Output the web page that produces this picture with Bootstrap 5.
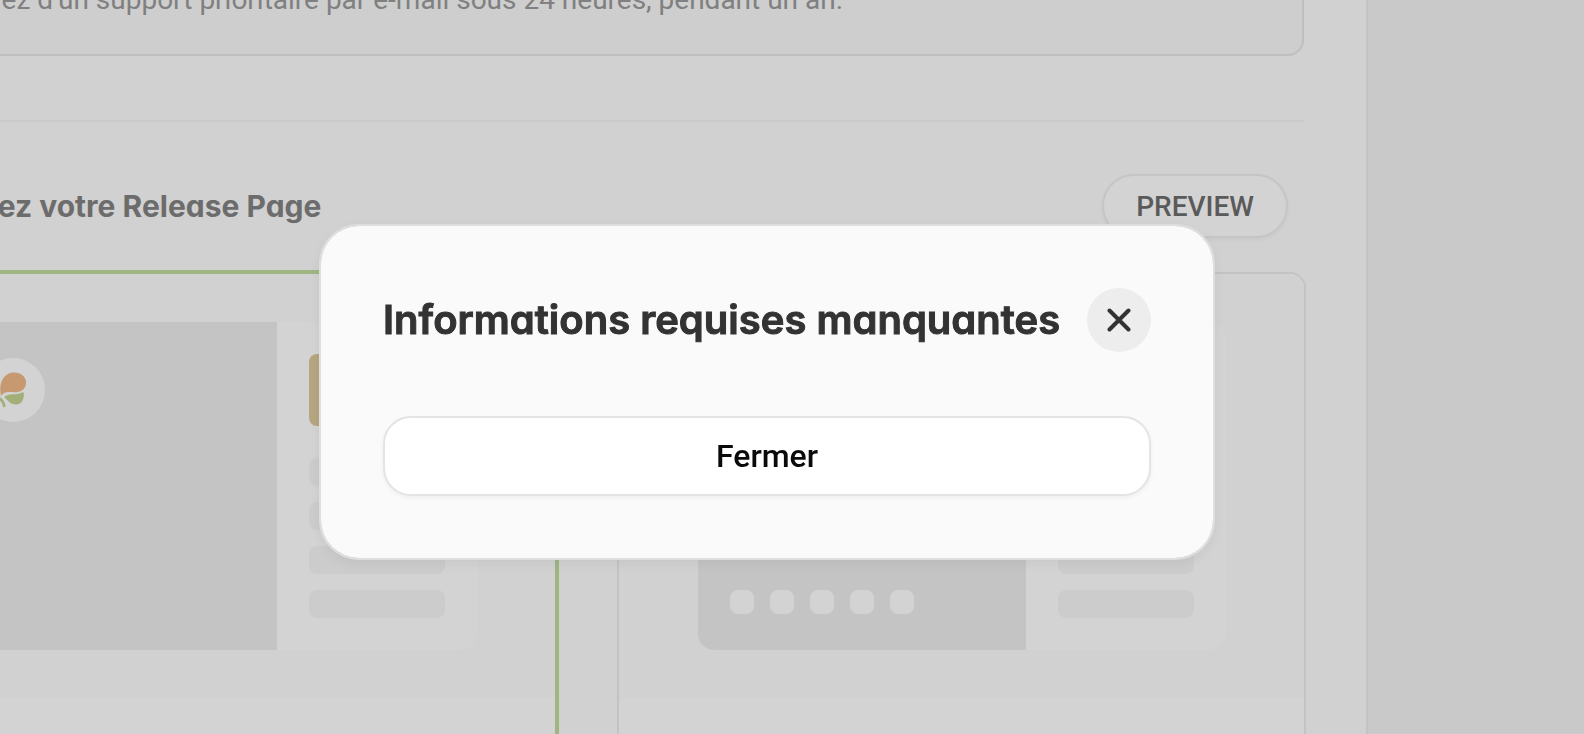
<!DOCTYPE html>
<html lang="fr">
<head>
<meta charset="utf-8">
<meta name="viewport" content="width=device-width, initial-scale=1">
<title>Release Page</title>
<link href="https://cdn.jsdelivr.net/npm/bootstrap@5.3.0/dist/css/bootstrap.min.css" rel="stylesheet">
<style>
  body { background: #c9c9c9; font-family: Roboto, "Liberation Sans", sans-serif; overflow: hidden; }
  .display-face { font-family: Inter, "Liberation Sans", sans-serif; font-feature-settings: "cv11"; font-weight: 700; }

  /* The settings sheet runs past the left and top edges of the window */
  .sheet { background: #d1d1d1; border-right: 2px solid #c3c3c3; margin: -80px 216px 0 -196px; padding: 0 62px 0 64px; height: calc(100vh + 80px); overflow: hidden; }
  .support-box { background: #cecece; border: 2px solid #bfbfbf; border-radius: 16px; padding: 62px 32px 38px; font-size: 28px; line-height: 32px; color: #808080; }
  .divider { height: 2px; margin: 64px 0 52px; background: #cacaca; }
  .section-head { padding: 0 16px 0 18px; margin-bottom: 34px; }
  .section-head h2 { font-size: 30px; line-height: 40px; color: #6c6c6c; }
  .btn-preview { --bs-btn-color: #5a5a5a; --bs-btn-bg: #d3d3d3; --bs-btn-border-color: #c5c5c5; --bs-btn-border-width: 2px; --bs-btn-border-radius: 32px; --bs-btn-padding-x: 32px; --bs-btn-padding-y: 0; --bs-btn-font-size: 28px; --bs-btn-font-weight: 500; height: 64px; line-height: 62px; box-shadow: 0 2px 4px rgba(0, 0, 0, .04); }

  .templates { display: grid; grid-template-columns: 1fr 1fr; gap: 60px; margin-right: -2px; }
  .template { border: 2px solid #c3c3c3; border-radius: 16px; background: #d3d3d3; overflow: hidden; height: 600px; }
  .template.selected { border-color: #9fb582; box-shadow: 0 0 0 2px #9fb582; }
  .stage { background: #d1d1d1; padding: 48px 0; }
  .mock { width: 528px; height: 328px; border-radius: 16px; background: #d3d3d3; overflow: hidden; }
  .mock-main { background: #c4c4c4; width: 328px; padding: 36px 32px; }
  .mock-side { width: 200px; padding: 32px; }
  .mock-logo { width: 64px; height: 64px; border-radius: 50%; background: #d3d3d3; }
  .mock-cta { height: 72px; border-radius: 8px; background: #b6a581; margin-bottom: 32px; }
  .mock-line { height: 28px; border-radius: 8px; background: #cccccc; margin-bottom: 16px; }
  .mock-dot { width: 24px; height: 24px; border-radius: 8px; background: #d3d3d3; }

  .modal { padding: 50px 50px 0 0; }
  .modal-dialog { --bs-modal-width: 896px; --bs-modal-margin: 0; max-width: 896px; margin: 0 auto; min-height: 100%; }
  .modal-content { --bs-modal-bg: #fafafa; --bs-modal-border-color: #dedede; --bs-modal-border-width: 2px; --bs-modal-border-radius: 40px; padding: 62px; box-shadow: 0 4px 12px rgba(0, 0, 0, .05); }
  .modal-title { font-size: 40px; font-weight: 600; -webkit-text-stroke: 1px #333; line-height: 64px; color: #333; }
  .btn-dismiss { width: 64px; height: 64px; border: 0; border-radius: 50%; background: #ededed; }
  .btn-fermer { --bs-btn-color: #0a0a0a; --bs-btn-bg: #fff; --bs-btn-border-color: #e4e4e4; --bs-btn-border-width: 2px; --bs-btn-border-radius: 28px; --bs-btn-padding-y: 0; --bs-btn-font-size: 32px; --bs-btn-font-weight: 500; height: 80px; line-height: 76px; margin-top: 64px; box-shadow: 0 2px 4px rgba(0, 0, 0, .05); }
</style>
</head>
<body>
<main class="sheet">
  <div class="support-box text-nowrap">Bénéficiez d'un support prioritaire par e-mail sous 24 heures, pendant un an.</div>
  <div class="divider"></div>
  <div class="section-head d-flex justify-content-between align-items-center">
    <h2 class="display-face m-0 text-nowrap">Concevez votre Release Page</h2>
    <button type="button" class="btn btn-preview">PREVIEW</button>
  </div>
  <div class="templates">
    <div class="template selected">
      <div class="stage d-flex justify-content-center">
        <div class="mock d-flex">
          <div class="mock-main">
            <div class="mock-logo">
              <svg width="64" height="64" viewBox="0 0 64 64" aria-hidden="true">
                <path d="M20 38C17 25 23 14.500 33 14.500C41 14.500 46 20 45 26C44 32 39 34.500 33 34.300C27 34 23 33.500 20 38Z" fill="#c69970"/>
                <path d="M23 39C28 34.500 35 38 42.500 34C44 40 41 46.500 35 46.500C29 46.500 27 42 23 39Z" fill="#a2af78"/>
                <path d="M10 39Q22 38 23.500 49" fill="none" stroke="#a2af78" stroke-width="2.500"/>
              </svg>
            </div>
          </div>
          <div class="mock-side">
            <div class="mock-cta"></div>
            <div class="mock-line"></div><div class="mock-line"></div><div class="mock-line"></div><div class="mock-line"></div>
          </div>
        </div>
      </div>
    </div>
    <div class="template">
      <div class="stage d-flex justify-content-center">
        <div class="mock d-flex">
          <div class="mock-main d-flex align-items-end gap-3">
            <div class="mock-dot"></div><div class="mock-dot"></div><div class="mock-dot"></div><div class="mock-dot"></div><div class="mock-dot"></div>
          </div>
          <div class="mock-side">
            <div class="mock-cta"></div>
            <div class="mock-line"></div><div class="mock-line"></div><div class="mock-line"></div><div class="mock-line"></div>
          </div>
        </div>
      </div>
    </div>
  </div>
</main>

<div class="modal d-block" tabindex="-1" role="dialog" aria-modal="true" aria-labelledby="missingTitle">
  <div class="modal-dialog modal-dialog-centered">
    <div class="modal-content">
      <div class="d-flex justify-content-between align-items-center">
        <h1 class="modal-title display-face text-nowrap" id="missingTitle">Informations requises manquantes</h1>
        <button type="button" class="btn-dismiss p-0 d-flex align-items-center justify-content-center" aria-label="Fermer la fenêtre">
          <svg width="24" height="24" viewBox="0 0 24 24" fill="none" stroke="#333" stroke-width="4" stroke-linecap="round" aria-hidden="true"><path d="M2.500 2.500 21.500 21.500M21.500 2.500 2.500 21.500"/></svg>
        </button>
      </div>
      <button type="button" class="btn btn-fermer w-100">Fermer</button>
    </div>
  </div>
</div>
<script src="https://cdn.jsdelivr.net/npm/bootstrap@5.3.0/dist/js/bootstrap.bundle.min.js"></script>
</body>
</html>
